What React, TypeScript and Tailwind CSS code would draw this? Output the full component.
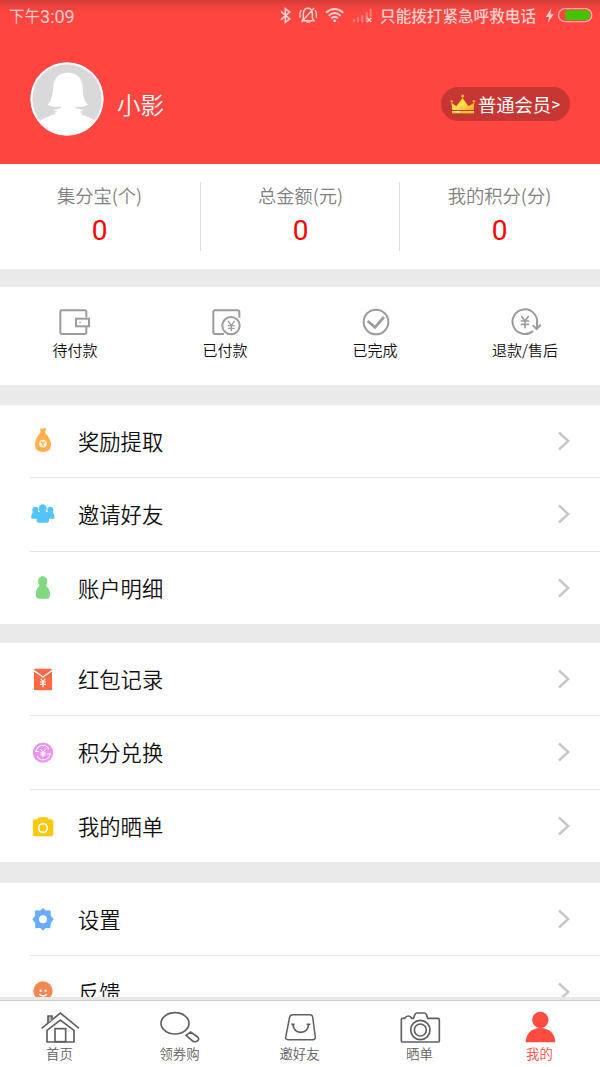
import type { ReactNode } from "react";

function StatusBar() {
  return (
    <div className="flex h-8 items-center pl-[9px] pr-[7px] text-[#ffcfcd]">
      <span className="text-[15.5px] font-normal">下午</span>
      <span className="font-['Roboto',sans-serif] text-[18px] font-normal">3:09</span>
      <svg className="ml-auto h-8 w-[96px]" viewBox="28 0 288 96" fill="none" stroke="currentColor">
        <path strokeWidth="5" d="M34 34 L60 57 L47 67 V26 L60 36 L34 59" />
        <g strokeWidth="4.5">
          <path d="M99 62 H133 L128 54 V39 Q126 25 115 25 Q103 25 101 39 V54 L97 62 M133 24 L96 66" />
          <path d="M91 37 V53 M140 37 V53 M95 30 L91 37 M136 30 L140 37" strokeWidth="4" />
          <path d="M110 66 H122" />
        </g>
        <g strokeWidth="6">
          <path d="M169 38 Q195 16 221 38" />
          <path d="M177 47 Q195 31 213 47" />
          <path d="M185 55 Q195 46 205 55" />
        </g>
        <circle cx="195" cy="62" r="4.5" fill="currentColor" stroke="none" />
        <g strokeWidth="6" opacity=".42">
          <path d="M253 67 V57 M265 67 V52 M278 67 V45 M291 67 V37 M303 50 V27" />
        </g>
        <path strokeWidth="4.5" d="M292 53 L305 66 M305 53 L292 66" />
      </svg>
      <span className="ml-[5px] text-[15.6px] font-medium">只能拨打紧急呼救电话</span>
      <svg className="ml-[7px] h-8 w-[50px]" viewBox="819 0 150 96" fill="none">
        <path d="M844 25 L827 51 H837 L833 69 L851 43 H841 Z" fill="#ffcfcd" />
        <rect x="865.5" y="26" width="100" height="39" rx="19.5" stroke="#ffaba7" strokeWidth="4" />
        <path d="M886 31 H950 Q961 34 961 45.5 Q961 57 950 60 H886 Z" fill="#46c300" />
      </svg>
    </div>
  );
}

function Avatar() {
  return (
    <svg className="mt-[2px] h-[74px] w-[74px] shrink-0" viewBox="91 187 222 222">
      <defs>
        <clipPath id="avatar">
          <circle cx="202" cy="298" r="106" />
        </clipPath>
      </defs>
      <circle cx="202" cy="298" r="110" fill="#fff" />
      <circle cx="202" cy="298" r="104" fill="#d9d9d9" />
      <path
        clipPath="url(#avatar)"
        fill="#fff"
        d="M144 315 Q158 304 160 268 Q162 219 204 219 Q247 219 249 266 Q250 302 265 315 Q252 322 228 321 L226 325 Q240 328 252 331 L239 338 L249 340 L243 344 Q276 354 292 368 L290 410 H110 L116 366 Q136 352 169 343 L163 339 L174 337 L161 331 Q174 328 184 325 L183 321 Q156 323 144 315 Z"
      />
    </svg>
  );
}

function Crown() {
  return (
    <svg className="h-5 w-[26px]" viewBox="540 283 78 60">
      <defs>
        <linearGradient id="gold" x1="0" x2="1" y1="0" y2="1">
          <stop offset="0" stopColor="#ffd93a" />
          <stop offset=".5" stopColor="#ffe14a" />
          <stop offset="1" stopColor="#f2a51d" />
        </linearGradient>
      </defs>
      <path d="M544 309 L559 320 L578 295 L595 320 L613 309 L611 331 H547 Z" fill="url(#gold)" />
      <rect x="546" y="334" width="66" height="7" fill="#f9c92c" />
      <path d="M556 337 L563 333 L572 337 L563 340 Z" fill="#fff6c8" />
      <circle cx="545" cy="305" r="4" fill="#f9a83a" />
      <circle cx="578" cy="289" r="4.5" fill="#f9b93a" />
      <circle cx="612" cy="305" r="4" fill="#f9a83a" />
    </svg>
  );
}

function Stat({ label }: { label: string }) {
  return (
    <div className="flex w-[199px] flex-col items-center">
      <span className="text-[18.3px] leading-[26px] text-[#808080]">{label}</span>
      <span className="mt-[7px] font-['Roboto',sans-serif] text-[28px] font-normal leading-[32px] text-[#f00]">0</span>
    </div>
  );
}

function Order({ label, viewBox, children }: { label: string; viewBox: string; children: ReactNode }) {
  return (
    <div className="flex w-[150px] flex-col items-center">
      <svg className="h-[34px] w-[150px]" viewBox={viewBox} fill="none" stroke="#9c9c9c" strokeWidth="6">
        {children}
      </svg>
      <span className="mt-px text-[15px] leading-[22px] text-[#111]">{label}</span>
    </div>
  );
}

function Row({ label, viewBox, last, children }: { label: string; viewBox: string; last?: boolean; children: ReactNode }) {
  return (
    <div
      className={
        last
          ? "ml-[30px] flex h-[72.4px] shrink-0 items-center"
          : "ml-[30px] flex h-[73.3px] shrink-0 items-center border-b border-[#e4e4e4]"
      }
    >
      <svg className="h-[30px] w-[26px]" viewBox={viewBox} fill="none">
        {children}
      </svg>
      <span className="ml-[22px] text-[21.3px] leading-[30px] text-[#111]">{label}</span>
      <svg className="ml-auto mr-[29px] h-5 w-[14px]" viewBox="0 0 14 20" fill="none">
        <path d="M2 1.5 L11.2 10 L2 18.5" stroke="#c7c7cb" strokeWidth="2.4" />
      </svg>
    </div>
  );
}

function Tab({ label, viewBox, active, children }: { label: string; viewBox: string; active?: boolean; children: ReactNode }) {
  return (
    <div className={active ? "flex w-[120px] flex-col items-center text-[#ff4c41]" : "flex w-[120px] flex-col items-center text-[#606060]"}>
      <svg className="h-9 w-[120px]" viewBox={viewBox} fill="none" stroke="currentColor" strokeWidth="5">
        {children}
      </svg>
      <span className="-mt-px mr-px text-[13.4px] leading-5">{label}</span>
    </div>
  );
}

export default function App() {
  return (
    <div className="flex h-[1067px] w-[600px] flex-col overflow-hidden bg-white font-['Noto_Sans_CJK_SC',sans-serif] font-[350]">
      <main className="flex min-h-0 flex-1 flex-col overflow-hidden bg-[#eaeaea]">
        <header className="h-[164px] shrink-0 bg-[#fe453f] bg-[linear-gradient(180deg,#d13c37_0px,#ee423c_6px,#fe453f_13px)]">
          <StatusBar />
          <div className="flex h-[132px] items-center pl-[30px] pr-[30px] text-white">
            <Avatar />
            <span className="ml-[13px] mt-[12px] text-[23.5px] leading-8">小影</span>
            <div className="ml-auto mt-3 flex h-[34px] w-[129px] items-center rounded-full bg-[#c63733] pl-[9px]">
              <Crown />
              <span className="-mt-px ml-[2px] text-[18.3px] font-normal leading-7">普通会员</span>
              <span className="font-['Roboto',sans-serif] text-[17px] font-normal leading-7">&gt;</span>
            </div>
          </div>
        </header>

        <section className="flex h-[105px] shrink-0 bg-white pt-[18px]">
          <Stat label="集分宝(个)" />
          <div className="ml-px h-[69px] w-px bg-[#ddd]" />
          <Stat label="总金额(元)" />
          <div className="-ml-px h-[69px] w-px bg-[#ddd]" />
          <Stat label="我的积分(分)" />
        </section>

        <section className="mt-[18px] flex h-[98px] shrink-0 bg-white pt-[17px]">
          <Order label="待付款" viewBox="0 419 450 102">
            <path d="M259 459 V443 Q259 438 254 438 H186 Q181 438 181 443 V504 Q181 509 186 509 H254 Q259 509 259 504 V488" />
            <rect x="228" y="463" width="39" height="23" />
            <circle cx="240" cy="474" r="2.5" fill="#9c9c9c" stroke="none" />
          </Order>
          <Order label="已付款" viewBox="450 419 450 102">
            <path d="M718 460 V443 Q718 438 713 438 H645 Q640 438 640 443 V504 Q640 509 645 509 H672" />
            <circle cx="693" cy="484" r="26" />
            <path strokeWidth="4" d="M684 470 L694 483 L704 470 M694 483 V501 M684 484 H704 M684 492 H704" />
          </Order>
          <Order label="已完成" viewBox="0 419 450 102">
            <circle cx="228" cy="473" r="37" />
            <path strokeWidth="8" d="M203 470 L225 489 L252 458" />
          </Order>
          <Order label="退款/售后" viewBox="450 419 450 102">
            <path d="M699 500 A37 37 0 1 1 711 479" />
            <path d="M711 470 V492 M698 483 L710 494 L722 481" />
            <path strokeWidth="5" d="M664 455 L675 470 L686 455 M675 469 V492 M662 470 H688 M662 480 H688" />
          </Order>
        </section>

        <section className="mt-5 flex shrink-0 flex-col bg-white">
          <Row label="奖励提取" viewBox="90 79 78 90">
            <path fill="#ffb04c" d="M121 86 L128 87 L134 84 L139 88 L136 95 L135 99 Q153 117 153 136 Q153 157 129 157 Q105 157 105 136 Q105 117 121 99 Z" />
            <circle cx="129" cy="132" r="11.5" fill="#fff2df" />
            <path d="M123 125 L129 132 L135 125 M129 132 V139" stroke="#ffb04c" strokeWidth="4" />
          </Row>
          <Row label="邀请好友" viewBox="90 298 78 90">
            <g fill="#54c5fb">
              <ellipse cx="106" cy="331" rx="9" ry="10" />
              <ellipse cx="151" cy="331" rx="9" ry="10" />
              <path d="M99 337 H121 V357 H94 V348 Q95 341 99 337 Z M136 337 H158 Q163 342 163 350 V357 H136 Z" />
              <ellipse cx="128" cy="327" rx="12" ry="13" />
              <path d="M121 336 H136 Q147 342 147 355 V363 Q147 369 140 369 H117 Q110 369 110 363 V355 Q110 342 121 336 Z" />
            </g>
          </Row>
          <Row label="账户明细" viewBox="90 517 78 90" last>
            <g fill="#82d982">
              <ellipse cx="128" cy="542" rx="14" ry="15" />
              <path d="M118 548 Q120 555 116 558 Q107 566 107 582 Q107 594 120 594 H138 Q150 594 150 582 Q150 566 141 558 Q137 555 139 548 Z" />
            </g>
          </Row>
        </section>

        <section className="mt-[19px] flex shrink-0 flex-col bg-white">
          <Row label="红包记录" viewBox="90 75 78 90">
            <rect x="102" y="89" width="54" height="65" rx="4" fill="#ff6945" />
            <path d="M102 95 L129 114 L156 95" stroke="#fff" strokeWidth="4" />
            <path d="M122 119 L129 128 L136 119 M129 128 V145 M120 129 H138 M120 136 H138" stroke="#fff" strokeWidth="3.5" />
          </Row>
          <Row label="积分兑换" viewBox="90 294 78 90">
            <circle cx="129" cy="341" r="30.5" fill="#e796ed" />
            <path d="M107 338 A22 22 0 0 1 145 326 V332 M151 344 A22 22 0 0 1 113 356 V350 M106 337 H117 M152 345 H141" stroke="#fff" strokeWidth="3" />
            <path d="M122 331 L129 341 L136 331 M129 341 V354 M121 342 H137 M121 348 H137" stroke="#fff" strokeWidth="3" />
          </Row>
          <Row label="我的晒单" viewBox="90 513 78 90" last>
            <path fill="#ffc808" d="M107 538 H113 L117 532 H142 L146 538 H152 Q160 538 160 546 V581 Q160 589 152 589 H107 Q99 589 99 581 V546 Q99 538 107 538 Z" />
            <circle cx="129" cy="564" r="13" stroke="#fff" strokeWidth="5" />
          </Row>
        </section>

        <section className="mt-[21px] flex shrink-0 flex-col bg-white">
          <Row label="设置" viewBox="90 104 78 90">
            <path
              fill="#67adff"
              stroke="#67adff"
              strokeWidth="5"
              strokeLinejoin="round"
              d="M129 119 L137 127 L149 125 L150 140 L158 150 L150 160 L149 174 L137 173 L129 181 L121 173 L108 174 L108 160 L100 150 L108 140 L108 125 L121 127 Z"
            />
            <circle cx="129" cy="150" r="12" fill="#fff" />
          </Row>
          <Row label="反馈" viewBox="90 324 78 90">
            <circle cx="129" cy="366" r="29" fill="#f58650" />
            <circle cx="122" cy="365" r="3.5" fill="#fff" />
            <circle cx="137" cy="365" r="3.5" fill="#fff" />
            <path d="M117 376 Q129 386 141 376" stroke="#fff" strokeWidth="4" />
          </Row>
        </section>
      </main>

      <nav className="flex h-[70px] shrink-0 border-t-[3px] border-[#e6e8e9] bg-white">
        <div className="flex w-[600px] border-t border-[#c9cbcd] pt-[7px]">
          <Tab label="首页" viewBox="0 414 360 108">
            <path d="M125 475 L181 429 L237 475" />
            <path d="M144 459 V438 H156 V449" fill="#bbb" />
            <path d="M141 516 V481 L181 450 L222 481 V516 Z" />
            <rect x="165" y="476" width="32" height="39" />
          </Tab>
          <Tab label="领券购" viewBox="360 414 360 108">
            <ellipse cx="525" cy="460" rx="42" ry="32" />
            <path d="M558 496 L572 486 L593 501 Q599 507 593 512 Q586 518 578 513 Z" />
          </Tab>
          <Tab label="邀好友" viewBox="720 414 360 108">
            <path strokeWidth="4.5" d="M879 434 H930 Q937 434 938 441 L946 502 Q946 509 939 509 H864 Q856 509 857 502 L869 441 Q870 434 879 434 Z" />
            <path d="M879 464 Q882 487 902 487 Q923 487 926 464 M874 463 H884 M920 463 H931" />
          </Tab>
          <Tab label="晒单" viewBox="180 414 360 108">
            <path d="M307 445 H314 Q318 438 325 438 Q332 438 335 445 H340 L345 433 Q347 429 351 429 H373 Q377 429 379 433 L383 445 H414 Q418 445 418 449 V512 Q418 516 414 516 H308 Q304 516 304 512 V449 Q304 445 307 445 Z" />
            <circle cx="361" cy="480" r="29" />
            <circle cx="361" cy="480" r="18" />
          </Tab>
          <Tab label="我的" viewBox="540 414 360 108" active>
            <g fill="currentColor" stroke="none">
              <circle cx="721" cy="450" r="24.5" />
              <path d="M677 517 Q679 476 721 474 Q764 476 766 517 Z" />
            </g>
          </Tab>
        </div>
      </nav>
    </div>
  );
}
